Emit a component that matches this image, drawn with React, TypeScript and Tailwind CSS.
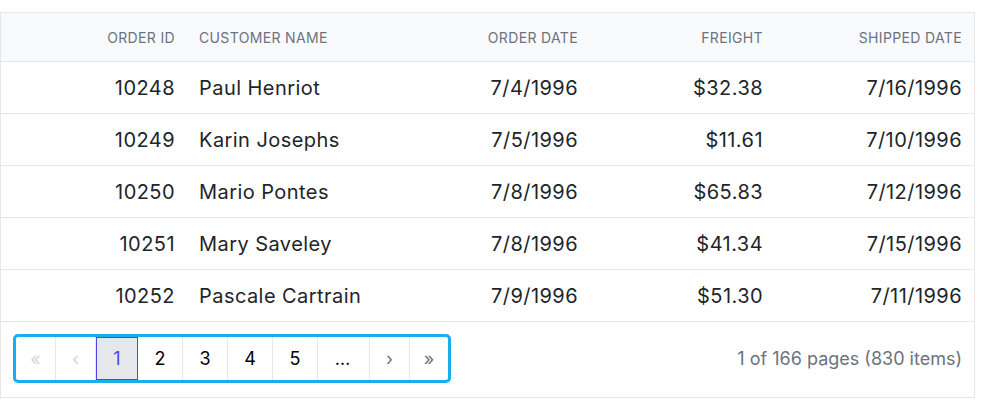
import React from 'react';

interface Order {
  id: number;
  customer: string;
  orderDate: string;
  freight: string;
  shipped: string;
}

const orders: Order[] = [
  { id: 10248, customer: 'Paul Henriot', orderDate: '7/4/1996', freight: '$32.38', shipped: '7/16/1996' },
  { id: 10249, customer: 'Karin Josephs', orderDate: '7/5/1996', freight: '$11.61', shipped: '7/10/1996' },
  { id: 10250, customer: 'Mario Pontes', orderDate: '7/8/1996', freight: '$65.83', shipped: '7/12/1996' },
  { id: 10251, customer: 'Mary Saveley', orderDate: '7/8/1996', freight: '$41.34', shipped: '7/15/1996' },
  { id: 10252, customer: 'Pascale Cartrain', orderDate: '7/9/1996', freight: '$51.30', shipped: '7/11/1996' },
];

const cols = 'grid grid-cols-[186px_204px_199px_185px_1fr]';

const PagerButton: React.FC<{ children: React.ReactNode; className?: string }> = ({ children, className = '' }) => (
  <div className={`h-full flex items-center justify-center border-r border-[#e5e7eb] ${className}`}>
    {children}
  </div>
);

const App: React.FC = () => {
  return (
    <div className="w-[991px] h-[409px] bg-white pt-3 font-['Inter',sans-serif]">
      <div className="w-[975px] border border-[#e5e7eb] border-b-0">
        <div className={`${cols} h-[49px] bg-[#f9fafb] border-b border-[#e5e7eb] text-[14px] tracking-[0.025em] text-[#6b7280] uppercase`}>
          <div className="px-3 flex items-center justify-end">Order ID</div>
          <div className="px-3 flex items-center">Customer Name</div>
          <div className="px-3 flex items-center justify-end">Order Date</div>
          <div className="px-3 flex items-center justify-end">Freight</div>
          <div className="px-3 flex items-center justify-end">Shipped Date</div>
        </div>
        {orders.map((o) => (
          <div key={o.id} className={`${cols} h-[52px] border-b border-[#e5e7eb] text-[20px] tracking-[0.022em] text-[#212529]`}>
            <div className="px-3 flex items-center justify-end">{o.id}</div>
            <div className="px-3 flex items-center">{o.customer}</div>
            <div className="px-3 flex items-center justify-end">{o.orderDate}</div>
            <div className="px-3 flex items-center justify-end">{o.freight}</div>
            <div className="px-3 flex items-center justify-end">{o.shipped}</div>
          </div>
        ))}
        <div className="h-[76px] flex items-start justify-between pl-3 pr-3 pt-3 border-b border-[#e5e7eb]">
          <div className="flex h-[49px] w-[438px] border-[3px] border-[#1aaef0] rounded-[5px] bg-white text-[18px] text-black">
            <PagerButton className="w-[40px] text-[#d1d5db]">«</PagerButton>
            <PagerButton className="w-[40px] text-[#d1d5db]">‹</PagerButton>
            <div className="h-full w-[42px] flex items-center justify-center bg-[#e5e7eb] border border-[#4f46e5] text-[#4f46e5]">1</div>
            <PagerButton className="w-[45px]">2</PagerButton>
            <PagerButton className="w-[45px]">3</PagerButton>
            <PagerButton className="w-[45px]">4</PagerButton>
            <PagerButton className="w-[45px]">5</PagerButton>
            <PagerButton className="w-[52px] tracking-[0.1em]">…</PagerButton>
            <PagerButton className="w-[40px] text-[#6b7280]">›</PagerButton>
            <div className="h-full flex-1 flex items-center justify-center text-[#6b7280]">»</div>
          </div>
          <div className="h-[49px] flex items-center text-[18px] text-[#6b7280]">1 of 166 pages (830 items)</div>
        </div>
      </div>
    </div>
  );
};

export default App;
